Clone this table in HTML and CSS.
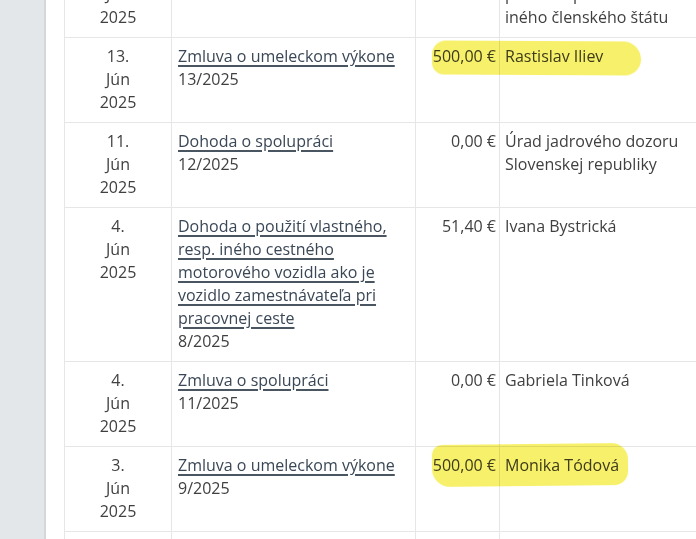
FILE: index.html
```html
<!DOCTYPE html>
<html lang="sk">
<head>
<meta charset="utf-8">
<title>Zmluvy</title>
<link rel="stylesheet" href="styles.css">
</head>
<body>
<div class="page">
  <aside class="rail"></aside>
  <main class="content">
    <table class="contracts">
      <colgroup>
        <col class="c-date"><col class="c-name"><col class="c-amount"><col class="c-party">
      </colgroup>
      <tbody>
        <tr>
          <td class="date">16.<br>Jún<br>2025</td>
          <td class="name"><a href="#">2T1000 1000</a><br>14/2025</td>
          <td class="amount">0,00 €</td>
          <td class="party">Union poisťovňa, pobočka poisťovne z iného členského štátu</td>
        </tr>
        <tr>
          <td class="date">13.<br>Jún<br>2025</td>
          <td class="name"><a href="#">Zmluva o umeleckom výkone</a><br>13/2025</td>
          <td class="amount"><span class="mark-wrap">500,00 €<span class="marker m1"></span></span></td>
          <td class="party">Rastislav Iliev</td>
        </tr>
        <tr>
          <td class="date">11.<br>Jún<br>2025</td>
          <td class="name"><a href="#">Dohoda o spolupráci</a><br>12/2025</td>
          <td class="amount">0,00 €</td>
          <td class="party">Úrad jadrového dozoru Slovenskej republiky</td>
        </tr>
        <tr>
          <td class="date">4.<br>Jún<br>2025</td>
          <td class="name"><a href="#">Dohoda o použití vlastného, resp. iného cestného motorového vozidla ako je vozidlo zamestnávateľa pri pracovnej ceste</a><br>8/2025</td>
          <td class="amount">51,40 €</td>
          <td class="party">Ivana Bystrická</td>
        </tr>
        <tr>
          <td class="date">4.<br>Jún<br>2025</td>
          <td class="name"><a href="#">Zmluva o spolupráci</a><br>11/2025</td>
          <td class="amount">0,00 €</td>
          <td class="party">Gabriela Tinková</td>
        </tr>
        <tr>
          <td class="date">3.<br>Jún<br>2025</td>
          <td class="name"><a href="#">Zmluva o umeleckom výkone</a><br>9/2025</td>
          <td class="amount"><span class="mark-wrap">500,00 €<span class="marker m2"></span></span></td>
          <td class="party">Monika Tódová</td>
        </tr>
        <tr>
          <td class="date">2.<br>Jún<br>2025</td>
          <td class="name"><a href="#">Zmluva o dielo</a><br>7/2025</td>
          <td class="amount">0,00 €</td>
          <td class="party">Peter Novák</td>
        </tr>
      </tbody>
    </table>
  </main>
</div>
</body>
</html>
```

FILE: styles.css
```css
html, body {
  margin: 0;
  padding: 0;
  overflow: hidden;
  background: #ffffff;
}

body {
  font-family: "Open Sans", "Noto Sans", sans-serif;
  font-size: 16px;
  line-height: 23px;
  color: #404040;
}

.page {
  display: flex;
  height: 539px;
}

.rail {
  flex: 0 0 44px;
  background: #e4e7ea;
  border-right: 2px solid #d3d6da;
}

.content {
  flex: 1;
  padding-left: 18px;
  overflow: hidden;
}

.contracts {
  border-collapse: collapse;
  table-layout: fixed;
  width: 640px;
  margin-top: -48px;
}

.c-date { width: 107px; }
.c-name { width: 244px; }
.c-amount { width: 84px; }
.c-party { width: 205px; }

.contracts td {
  border: 1px solid #e6e6e6;
  padding: 7px 6px 8px 6px;
  vertical-align: top;
}

.date {
  text-align: center;
}

.name a {
  color: #3a4756;
  text-decoration: underline;
  text-decoration-color: #4a5562;
  text-decoration-thickness: 1.5px;
  text-underline-offset: 3px;
}

.contracts td.amount {
  text-align: right;
  white-space: nowrap;
  padding-right: 3px;
}

.contracts td.party {
  padding-left: 5px;
}

.mark-wrap {
  position: relative;
}

.marker {
  position: absolute;
  background: #f7f06a;
  mix-blend-mode: multiply;
  border-radius: 14px 18px 16px 12px;
  filter: blur(0.6px);
  pointer-events: none;
}

.m1 {
  left: -1px;
  top: -4px;
  width: 209px;
  height: 34px;
  transform: rotate(0.3deg);
}

.m2 {
  left: -1px;
  top: -10px;
  width: 196px;
  height: 42px;
  border-radius: 10px 16px 14px 18px;
  transform: rotate(-0.6deg);
}
```
